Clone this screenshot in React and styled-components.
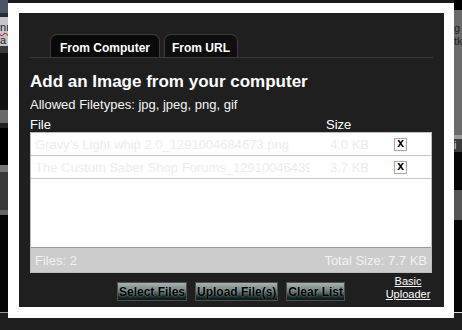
import React from 'react';
import styled, { createGlobalStyle } from 'styled-components';

const GlobalStyle = createGlobalStyle`
  html, body {
    margin: 0;
    padding: 0;
    background: #1e1e1e;
  }
  body {
    font-family: "Liberation Sans", Arial, sans-serif;
  }
`;

// the dimmed page behind the dialog
const Screen = styled.div`
  width: 462px;
  height: 330px;
  overflow: hidden;
  display: grid;
  grid-template-columns: 8px 446px 8px;
  grid-template-rows: 3px 315px 12px;
  background: #1e1e1e;
`;

const TopStrip = styled.div`
  grid-column: 2;
  grid-row: 1;
  background: #1a1a1a;
`;

const SideStrip = styled.div`
  grid-column: ${(p) => p.$col};
  grid-row: 1 / 3;
  display: flex;
  flex-direction: column;
  overflow: hidden;
`;

const Band = styled.div`
  flex: none;
  height: ${(p) => p.$h}px;
  background: ${(p) => p.$c};
  color: ${(p) => p.$fg || '#222'};
  font-size: 11px;
  line-height: 13px;
  white-space: nowrap;
  overflow: hidden;
  padding-top: ${(p) => p.$pt || 0}px;
  box-sizing: border-box;
`;

const Squiggle = styled.span`
  text-decoration: underline wavy #d02020;
`;

const BottomStrip = styled.div`
  grid-column: 1 / 4;
  grid-row: 3;
  background: #1e1e1e;
`;

// dialog
const Frame = styled.div`
  grid-column: 2;
  grid-row: 2;
  background: #ffffff;
  padding: 10px 10px 11px 11px;
  box-sizing: border-box;
`;

const Panel = styled.div`
  height: 294px;
  background: #1f1f1f;
  padding: 0 12px 0 11px;
  box-sizing: border-box;
  display: flex;
  flex-direction: column;
  color: #ffffff;
`;

const Tabs = styled.div`
  margin-top: 21px;
  display: flex;
  gap: 4px;
  padding-left: 20px;
  border-bottom: 1px solid #3a3a3a;
  margin-right: -1px;
`;

const Tab = styled.div`
  height: 23px;
  box-sizing: border-box;
  padding: 6px ${(p) => p.$pad}px 0;
  background: ${(p) => (p.$active ? '#0a0a0a' : '#0e0e0e')};
  border: 1px solid #3d3d3d;
  border-bottom: none;
  border-radius: 7px 7px 0 0;
  font-size: 12px;
  font-weight: bold;
  line-height: 14px;
  color: #ffffff;
`;

const Heading = styled.h2`
  margin: 14px 0 0;
  font-size: 17px;
  line-height: 20px;
  font-weight: bold;
  color: #ffffff;
`;

const Note = styled.div`
  margin-top: 5px;
  font-size: 13px;
  line-height: 15px;
  color: #f4f4f4;
`;

const HeaderRow = styled.div`
  margin-top: 5px;
  display: flex;
  font-size: 13px;
  line-height: 15px;
  color: #ffffff;
`;

const HeaderCell = styled.div`
  width: ${(p) => p.$w}px;
`;

const ListBox = styled.div`
  height: 141px;
  box-sizing: border-box;
  border: 1px solid #bdbdbd;
  background: #ffffff;
  display: flex;
  flex-direction: column;
`;

const Rows = styled.div`
  flex: 1;
`;

const Row = styled.div`
  height: 23px;
  box-sizing: border-box;
  border-bottom: 1px solid #c6c6c6;
  display: flex;
  align-items: center;
  padding-left: 4px;
  font-size: 13px;
  line-height: 15px;
  color: #ececec;
`;

const Name = styled.div`
  width: 275px;
  overflow: hidden;
  white-space: nowrap;
  margin-right: 20px;
`;

const Size = styled.div`
  width: 64px;
`;

const Remove = styled.button`
  width: 13px;
  height: 13px;
  padding: 0 0 2px;
  margin: 0;
  border: 1px solid #a9a9a9;
  background: #ffffff;
  color: #000000;
  font-family: "Liberation Sans", Arial, sans-serif;
  font-size: 12px;
  font-weight: bold;
  line-height: 9px;
  display: flex;
  align-items: center;
  justify-content: center;
  box-sizing: border-box;
`;

const Footer = styled.div`
  height: 25px;
  box-sizing: border-box;
  border-top: 1px solid #9a9a9a;
  background: #cccccc;
  display: flex;
  align-items: center;
  justify-content: space-between;
  padding: 0 4px;
  font-size: 13px;
  line-height: 15px;
  color: #f2f2f2;
`;

const Actions = styled.div`
  margin-top: 2px;
  display: grid;
  grid-template-columns: 1fr auto 1fr;
  align-items: end;
`;

const Buttons = styled.div`
  grid-column: 2;
  display: flex;
  gap: 8px;
`;

const Button = styled.button`
  height: 19px;
  padding: 0 1px;
  margin: 0;
  border: 1px solid #4e4e4e;
  background: linear-gradient(#a9b3b3 0%, #6f7f7f 45%, #1c2c2c 80%, #0c1818 100%);
  color: #000000;
  font-family: "Liberation Sans", Arial, sans-serif;
  font-size: 12px;
  font-weight: bold;
  line-height: 16px;
  text-shadow: 0 0 2px rgba(200, 215, 215, 0.6);
  cursor: pointer;
`;

const BasicLink = styled.a`
  grid-column: 3;
  justify-self: end;
  width: 46px;
  margin-right: 1px;
  text-align: center;
  font-size: 11px;
  line-height: 13px;
  color: #ffffff;
  text-decoration: underline;
`;

const leftBands = [
  { h: 13, c: '#4a5566' },
  { h: 4, c: '#2a2a2a' },
  { h: 29, c: '#c4c6cb', lines: ['nı', 'a'], squiggle: true, pt: 4 },
  { h: 7, c: '#3a3a3a' },
  { h: 57, c: '#111111' },
  { h: 13, c: '#6a6a6a' },
  { h: 5, c: '#222222' },
  { h: 37, c: '#000000' },
  { h: 7, c: '#777777' },
  { h: 38, c: '#3a3a3a' },
  { h: 5, c: '#666666' },
  { h: 97, c: '#050505' },
  { h: 1, c: '#9a9a9a' },
  { h: 5, c: '#1e1e1e' },
];

const rightBands = [
  { h: 10, c: '#000000' },
  { h: 12, c: '#6b6b6b' },
  { h: 26, c: '#6b6b6b', lines: ['g', 'tk'] },
  { h: 87, c: '#6b6b6b' },
  { h: 4, c: '#9a9a9a' },
  { h: 13, c: '#3a3a3a', lines: ['i'], fg: '#cfcfcf' },
  { h: 38, c: '#050505' },
  { h: 30, c: '#555555' },
  { h: 92, c: '#050505' },
  { h: 1, c: '#dddddd' },
  { h: 5, c: '#1e1e1e' },
];

const files = [
  { name: "Gravy's Light whip 2.0_1291004684673.png", size: '4.0 KB' },
  { name: 'The Custom Saber Shop Forums_1291004643958.png', size: '3.7 KB' },
];

function Strip({ col, bands }) {
  return (
    <SideStrip $col={col}>
      {bands.map((b, i) => (
        <Band key={i} $h={b.h} $c={b.c} $fg={b.fg} $pt={b.pt}>
          {(b.lines || []).map((line, j) => (
            <div key={j}>{b.squiggle && j === 0 ? <Squiggle>{line}</Squiggle> : line}</div>
          ))}
        </Band>
      ))}
    </SideStrip>
  );
}

export default function App() {
  return (
    <>
      <GlobalStyle />
      <Screen>
        <Strip col={1} bands={leftBands} />
        <TopStrip />
        <Frame>
          <Panel>
            <Tabs>
              <Tab $active $pad={9}>From Computer</Tab>
              <Tab $pad={7}>From URL</Tab>
            </Tabs>
            <Heading>Add an Image from your computer</Heading>
            <Note>Allowed Filetypes: jpg, jpeg, png, gif</Note>
            <HeaderRow>
              <HeaderCell $w={296}>File</HeaderCell>
              <HeaderCell $w={60}>Size</HeaderCell>
            </HeaderRow>
            <ListBox>
              <Rows>
                {files.map((f) => (
                  <Row key={f.name}>
                    <Name>{f.name}</Name>
                    <Size>{f.size}</Size>
                    <Remove>x</Remove>
                  </Row>
                ))}
              </Rows>
              <Footer>
                <span>Files: {files.length}</span>
                <span>Total Size: 7.7 KB</span>
              </Footer>
            </ListBox>
            <Actions>
              <Buttons>
                <Button>Select Files</Button>
                <Button>Upload File(s)</Button>
                <Button>Clear List</Button>
              </Buttons>
              <BasicLink href="#">Basic Uploader</BasicLink>
            </Actions>
          </Panel>
        </Frame>
        <Strip col={3} bands={rightBands} />
        <BottomStrip />
      </Screen>
    </>
  );
}
